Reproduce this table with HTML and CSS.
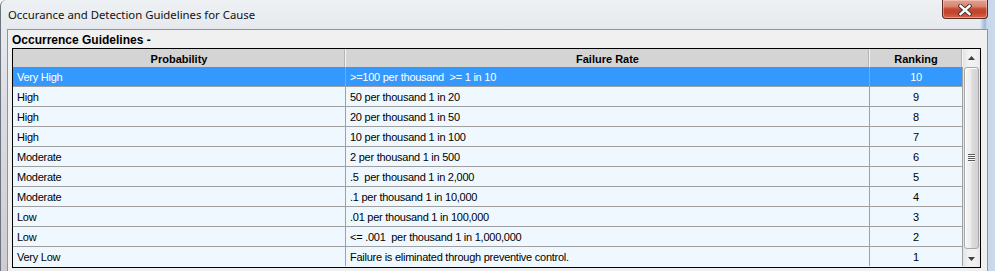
FILE: index.html
```html
<!DOCTYPE html>
<html lang="en">
<head>
<meta charset="utf-8">
<title>Occurance and Detection Guidelines for Cause</title>
<link rel="stylesheet" href="styles.css">
</head>
<body>
<div class="window">
  <div class="titlebar">
    <span class="title">Occurance and Detection Guidelines for Cause</span>
    <div class="close-btn">
      <svg width="14" height="12" viewBox="0 0 14 12" aria-hidden="true">
        <path d="M2.5 2 L11.5 10 M11.5 2 L2.5 10" stroke="#3a2a28" stroke-width="4.2" stroke-linecap="square" fill="none"/>
        <path d="M2.5 2 L11.5 10 M11.5 2 L2.5 10" stroke="#ffffff" stroke-width="2.4" stroke-linecap="square" fill="none"/>
      </svg>
    </div>
  </div>
  <div class="client">
    <div class="group-label">Occurrence Guidelines -</div>
    <div class="grid">
      <div class="grid-body">
        <div class="row header">
          <div class="cell col-prob">Probability</div>
          <div class="cell col-rate">Failure Rate</div>
          <div class="cell col-rank">Ranking</div>
        </div>
        <div class="row selected">
          <div class="cell col-prob">Very High</div>
          <div class="cell col-rate">&gt;=100 per thousand&nbsp; &gt;= 1 in 10</div>
          <div class="cell col-rank">10</div>
        </div>
        <div class="row">
          <div class="cell col-prob">High</div>
          <div class="cell col-rate">50 per thousand 1 in 20</div>
          <div class="cell col-rank">9</div>
        </div>
        <div class="row">
          <div class="cell col-prob">High</div>
          <div class="cell col-rate">20 per thousand 1 in 50</div>
          <div class="cell col-rank">8</div>
        </div>
        <div class="row">
          <div class="cell col-prob">High</div>
          <div class="cell col-rate">10 per thousand 1 in 100</div>
          <div class="cell col-rank">7</div>
        </div>
        <div class="row">
          <div class="cell col-prob">Moderate</div>
          <div class="cell col-rate">2 per thousand 1 in 500</div>
          <div class="cell col-rank">6</div>
        </div>
        <div class="row">
          <div class="cell col-prob">Moderate</div>
          <div class="cell col-rate">.5&nbsp; per thousand 1 in 2,000</div>
          <div class="cell col-rank">5</div>
        </div>
        <div class="row">
          <div class="cell col-prob">Moderate</div>
          <div class="cell col-rate">.1 per thousand 1 in 10,000</div>
          <div class="cell col-rank">4</div>
        </div>
        <div class="row">
          <div class="cell col-prob">Low</div>
          <div class="cell col-rate">.01 per thousand 1 in 100,000</div>
          <div class="cell col-rank">3</div>
        </div>
        <div class="row">
          <div class="cell col-prob">Low</div>
          <div class="cell col-rate">&lt;= .001&nbsp; per thousand 1 in 1,000,000</div>
          <div class="cell col-rank">2</div>
        </div>
        <div class="row last">
          <div class="cell col-prob">Very Low</div>
          <div class="cell col-rate">Failure is eliminated through preventive control.</div>
          <div class="cell col-rank">1</div>
        </div>
      </div>
      <div class="vscroll">
        <div class="arrow">
          <svg width="7" height="4" viewBox="0 0 7 4" aria-hidden="true"><path d="M0 4 L3.5 0 L7 4 Z" fill="#404040"/></svg>
        </div>
        <div class="track">
          <div class="thumb">
            <div class="grip"><i></i><i></i><i></i><i></i></div>
          </div>
        </div>
        <div class="arrow">
          <svg width="7" height="4" viewBox="0 0 7 4" aria-hidden="true"><path d="M0 0 L7 0 L3.5 4 Z" fill="#404040"/></svg>
        </div>
      </div>
    </div>
  </div>
</div>
</body>
</html>
```

FILE: styles.css
```css
html, body {
  margin: 0;
  padding: 0;
  background: #ffffff;
}

.window {
  width: 995px;
  height: 271px;
  box-sizing: border-box;
  overflow: hidden;
  display: flex;
  flex-direction: column;
  padding: 0 7px 0 6px;
  border-left: 1px solid #6e757d;
  border-top-left-radius: 6px;
  background:
    linear-gradient(to right, rgba(0,0,0,0) 0, rgba(0,0,0,0) 979px, #c4d4e8 981px, #9cb9dc 984px, #c9d8ea 986px),
    linear-gradient(to bottom, #eef1f4 0, #e6eaee 28px, #d8dce2 120px, #cfcbd1 271px);
}

/* title bar */
.titlebar {
  height: 29px;
  flex: none;
  display: flex;
  align-items: flex-start;
}

.title {
  font-family: "Noto Sans", "Open Sans", sans-serif;
  font-size: 11.35px;
  line-height: 14px;
  color: #111111;
  padding-top: 8px;
  padding-left: 1px;
  white-space: nowrap;
}

.close-btn {
  margin-left: auto;
  width: 46px;
  height: 19px;
  box-sizing: border-box;
  border: 1px solid #5c2a22;
  border-top: none;
  border-radius: 0 0 4px 4px;
  background: linear-gradient(to bottom, #e3a291 0, #d98570 35%, #c5492f 50%, #c2432a 70%, #d0684e 100%);
  box-shadow: inset 0 0 0 1px rgba(255, 220, 210, 0.45);
  display: flex;
  align-items: center;
  justify-content: center;
}

.close-btn svg {
  display: block;
  margin-top: 1px;
}

/* client area */
.client {
  flex: 1;
  background: #f0f0f0;
  border: 1px solid #8e949b;
  border-bottom: none;
  display: flex;
  flex-direction: column;
  padding-left: 4px;
}

.group-label {
  height: 18px;
  font-family: "Liberation Sans", Arial, sans-serif;
  font-weight: bold;
  font-size: 12px;
  line-height: 20px;
  color: #000000;
}

/* data grid */
.grid {
  width: 969px;
  height: 220px;
  box-sizing: border-box;
  border: 1px solid #000000;
  display: flex;
  background: #f0f8ff;
}

.grid-body {
  width: 950px;
  display: flex;
  flex-direction: column;
}

.row {
  display: flex;
  height: 20px;
  box-sizing: border-box;
  border-bottom: 1px solid #a0a0a0;
  font-family: "Liberation Sans", Arial, sans-serif;
  font-size: 11px;
  letter-spacing: -0.25px;
  line-height: 20px;
  color: #000000;
}

.row.last {
  border-bottom: none;
  height: 19px;
}

.cell {
  box-sizing: border-box;
  border-right: 1px solid #a0a0a0;
  padding-left: 4px;
  white-space: nowrap;
  overflow: hidden;
}

.col-prob { width: 333px; }
.col-rate { width: 524px; }
.col-rank { width: 93px; text-align: center; padding-left: 0; }

.row.header {
  height: 18px;
  border-bottom: none;
  background: #d4d4d4;
  font-weight: bold;
  letter-spacing: 0;
  line-height: 20px;
}

.row.header .cell {
  text-align: center;
  padding-left: 0;
  border-right: 1px solid #f4f4f4;
  box-shadow: inset -1px 0 0 #b4b4b4;
}

.row.selected {
  background: #3399ff;
  color: #ffffff;
}

/* vertical scrollbar */
.vscroll {
  width: 17px;
  display: flex;
  flex-direction: column;
  background: linear-gradient(to right, #e3e3e3 0, #f1f1f1 30%, #f1f1f1 70%, #e8e8e8 100%);
}

.arrow {
  height: 17px;
  flex: none;
  display: flex;
  align-items: center;
  justify-content: center;
}

.arrow svg {
  display: block;
}

.track {
  flex: 1;
  display: flex;
  padding: 1px 1px;
}

.thumb {
  flex: 1;
  box-sizing: border-box;
  border: 1px solid #a8a8a8;
  border-radius: 3px;
  background: linear-gradient(to right, #f6f6f6 0, #ececec 45%, #dcdcdc 55%, #d2d2d2 100%);
  box-shadow: inset 1px 1px 0 #ffffff;
  display: flex;
  align-items: center;
  justify-content: center;
}

.grip {
  display: flex;
  flex-direction: column;
  gap: 1px;
  margin-top: -2px;
}

.grip i {
  display: block;
  width: 7px;
  height: 1px;
  background: #5a5a5a;
  box-shadow: 0 1px 0 #f8f8f8;
}
```
